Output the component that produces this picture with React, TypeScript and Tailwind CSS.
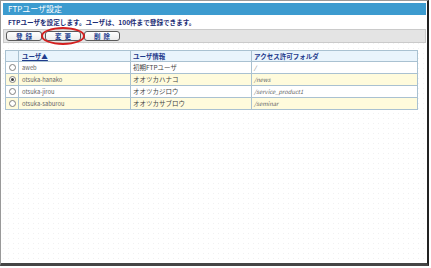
import React from "react";

const users = [
  { id: "aweb", info: "初期FTPユーザ", folder: "/", checked: false },
  { id: "otsuka-hanako", info: "オオツカハナコ", folder: "/news", checked: true },
  { id: "otsuka-jirou", info: "オオツカジロウ", folder: "/service_product1", checked: false },
  { id: "otsuka-saburou", info: "オオツカサブロウ", folder: "/seminar", checked: false },
];

function Radio({ checked }: { checked: boolean }) {
  return (
    <span className="mx-auto flex h-[7px] w-[7px] items-center justify-center rounded-full border border-[#808080] bg-white">
      {checked && <span className="h-[3px] w-[3px] rounded-full bg-[#3a3a3a]" />}
    </span>
  );
}

function ToolButton({ label }: { label: string }) {
  return (
    <button
      type="button"
      className="flex h-[10px] w-[36px] items-center justify-center rounded-[3px] border border-[#5a5a5a] bg-gradient-to-b from-white to-[#ececec] pl-[3px] text-[6.5px] leading-none font-bold tracking-[3px] text-[#23408f]"
    >
      {label}
    </button>
  );
}

export default function App() {
  return (
    <div className="h-[268px] w-[431px] overflow-hidden bg-white font-['Noto_Sans_CJK_JP',sans-serif]">
      <div className="relative h-[266px] w-[429px] border-t border-l border-[#999] border-r-2 border-r-[#222] border-b-[3px] border-b-[#454545] bg-[radial-gradient(circle,#f1f1f1_0.7px,transparent_1px)] bg-size-[5px_5px] pt-[2px] pr-[1px] pl-[2px]">
        <div className="flex h-[12px] items-center bg-[#3c9bcf] pl-[5px] text-[8px] leading-none text-white">
          FTPユーザ設定
        </div>
        <div className="flex h-[14px] items-center bg-white pl-[5px] text-[6.6px] leading-none font-bold text-[#1c2c74]">
          FTPユーザを設定します。ユーザは、100件まで登録できます。
        </div>
        <div className="flex h-[14px] items-center gap-[3px] border border-[#cacaca] bg-[#e4e4e4] pl-[2px]">
          <ToolButton label="登録" />
          <ToolButton label="変更" />
          <ToolButton label="削除" />
        </div>

        <table className="mt-[7px] ml-[2px] w-[412px] table-fixed border-collapse bg-white text-[6.5px] leading-none">
          <colgroup>
            <col className="w-[13px]" />
            <col className="w-[112px]" />
            <col className="w-[121px]" />
            <col className="w-[166px]" />
          </colgroup>
          <thead>
            <tr className="h-[11px] bg-[#e9f4fc] font-bold text-[#1f3b8c]">
              <th className="border border-[#a9c1d1]" />
              <th className="border border-[#a9c1d1] pl-[3px] text-left">
                <span className="underline">ユーザ▲</span>
              </th>
              <th className="border border-[#a9c1d1] pl-[2px] text-left">ユーザ情報</th>
              <th className="border border-[#a9c1d1] pl-[2px] text-left">アクセス許可フォルダ</th>
            </tr>
          </thead>
          <tbody>
            {users.map((u, i) => (
              <tr key={u.id} className={`h-[12px] text-[#666] ${i % 2 === 1 ? "bg-[#fffbdc]" : "bg-white"}`}>
                <td className="border border-[#a9c1d1]">
                  <Radio checked={u.checked} />
                </td>
                <td className="border border-[#a9c1d1] pl-[3px] text-[5.8px]">{u.id}</td>
                <td className="border border-[#a9c1d1] pl-[2px] text-[#444]">{u.info}</td>
                <td className="border border-[#a9c1d1] pl-[2px] text-[5.8px] italic">{u.folder}</td>
              </tr>
            ))}
          </tbody>
        </table>

        <div className="pointer-events-none absolute top-[26px] left-[40px] h-[18px] w-[44px] rounded-[50%] border-2 border-[#d41f1f]" />
      </div>
    </div>
  );
}
